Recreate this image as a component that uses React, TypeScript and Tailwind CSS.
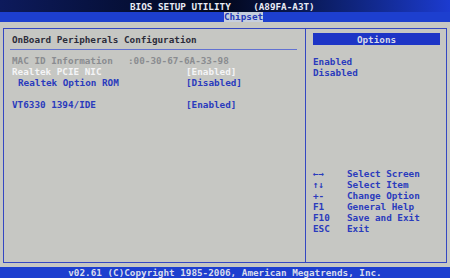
import React from "react";

const mono = { fontFamily: '"DejaVu Sans Mono", "Liberation Mono", monospace' };

export default function App() {
  const help: [string, string][] = [
    ["←→", "Select Screen"],
    ["↑↓", "Select Item"],
    ["+-", "Change Option"],
    ["F1", "General Help"],
    ["F10", "Save and Exit"],
    ["ESC", "Exit"],
  ];
  return (
    <div
      className="w-[450px] h-[278px] bg-[#c6c7c3] flex flex-col overflow-hidden text-[9.3px] font-bold leading-[11px]"
      style={mono}
    >
      {/* title */}
      <div className="h-[12px] bg-gradient-to-r from-[#0d1a5c] via-[#03081e] to-[#1c3bd0] flex items-center pl-[130px] text-[#e8eaf4] whitespace-pre">
        {"BIOS SETUP UTILITY    (A89FA-A3T)"}
      </div>
      {/* tab bar */}
      <div className="h-[10px] bg-[#1d3fcf] flex pl-[224px]">
        <div className="w-[39px] h-[10px] bg-[#c6cede] text-[#2338b8] flex items-center justify-center leading-[10px]">
          Chipset
        </div>
      </div>
      {/* body */}
      <div className="flex-1 pt-[6px] px-[3px] pb-[4px] flex">
        <div className="flex-1 border border-[#3447c2] flex">
          {/* left panel */}
          <div className="w-[302px] border-r border-[#3447c2] flex flex-col pl-[6px] pr-[8px] pt-[5px]">
            <div className="text-[#2c2c3a] pl-[2px] h-[11px]">OnBoard Peripherals Configuration</div>
            <div className="mt-[4px] h-px bg-[#6272d2]" />
            <div className="mt-[5px] flex flex-col pl-[2px] whitespace-pre">
              <div className="flex h-[11px]">
                <span className="w-[116px] text-[#8a8c90]">MAC ID Information</span>
                <span className="text-[#8a8c90]">:00-30-67-6A-33-98</span>
              </div>
              <div className="flex h-[11px] text-[#f4f4f6]">
                <span className="w-[174px]">Realtek PCIE NIC</span>
                <span>[Enabled]</span>
              </div>
              <div className="flex h-[11px] text-[#2a3bbd]">
                <span className="w-[174px] pl-[6px]">Realtek Option ROM</span>
                <span>[Disabled]</span>
              </div>
              <div className="h-[11px]" />
              <div className="flex h-[11px] text-[#2a3bbd]">
                <span className="w-[174px]">VT6330 1394/IDE</span>
                <span>[Enabled]</span>
              </div>
            </div>
          </div>
          {/* right panel */}
          <div className="flex-1 flex flex-col pl-[7px] pr-[6px] pt-[4px]">
            <div className="h-[12px] bg-[#1d35c6] text-[#d6daea] flex items-center justify-center">Options</div>
            <div className="mt-[11px] text-[#2a3bbd] flex flex-col">
              <div className="h-[11px]">Enabled</div>
              <div className="h-[11px]">Disabled</div>
            </div>
            <div className="mt-[90px] text-[#2a3bbd] flex flex-col">
              {help.map(([k, d]) => (
                <div key={k} className="flex h-[11px]">
                  <span className="w-[34px]">{k}</span>
                  <span>{d}</span>
                </div>
              ))}
            </div>
          </div>
        </div>
      </div>
      {/* footer */}
      <div className="h-[11px] bg-[#1d3fcf] text-[#d8dcec] flex items-center justify-center">
        v02.61 (C)Copyright 1985-2006, American Megatrends, Inc.
      </div>
    </div>
  );
}
